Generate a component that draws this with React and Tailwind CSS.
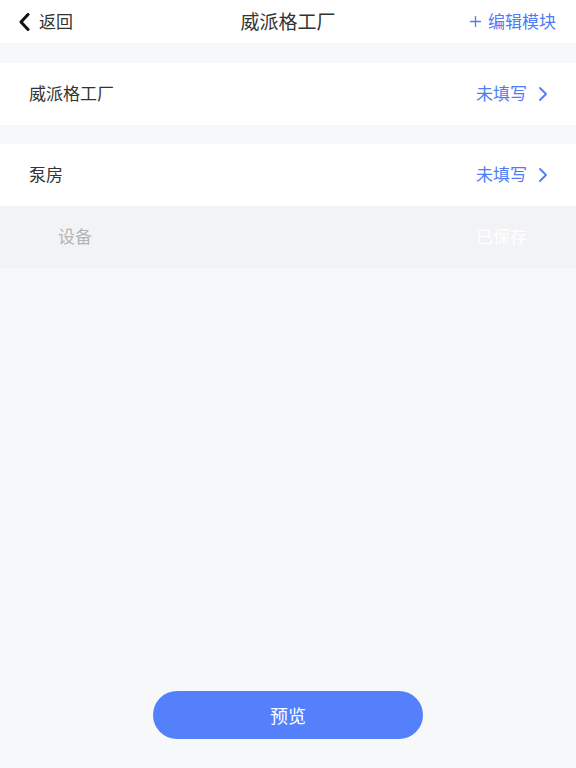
import { ChevronRight, Plus } from 'lucide-react'

const font = { fontFamily: '"Noto Sans CJK SC", "Noto Sans", sans-serif' }

function Row({ label, value }) {
  return (
    <div className="h-[62px] bg-white flex items-center pl-[29px] pr-[21px]">
      <span className="text-[17px] text-[#333] -mt-[2px]">{label}</span>
      <div className="flex-1" />
      <span className="text-[17px] text-[#4d7cf6] -mt-[2px]">{value}</span>
      <ChevronRight className="w-[24px] h-[24px] text-[#4d7cf6] ml-[4px]" strokeWidth={1.8} />
    </div>
  )
}

export default function App() {
  return (
    <div className="w-[576px] h-[768px] bg-[#f7f8fa] flex flex-col" style={font}>
      {/* Header */}
      <div className="h-[43px] bg-white grid grid-cols-[1fr_auto_1fr] items-center px-[18px] shrink-0">
        <div className="flex items-center">
          <svg width="12" height="18" viewBox="0 0 12 18" className="text-[#111]">
            <path d="M10 1.5 L3 9 L10 16.5" fill="none" stroke="currentColor" strokeWidth="3" strokeLinecap="round" strokeLinejoin="round" />
          </svg>
          <span className="text-[17px] text-[#333] ml-[9px] -mt-[1px]">返回</span>
        </div>
        <div className="text-center text-[19px] text-[#333] -mt-[1px]">威派格工厂</div>
        <div className="flex items-center justify-end text-[#4d7cf6] pr-[2px]">
          <Plus className="w-[17px] h-[17px]" strokeWidth={1.8} />
          <span className="text-[17px] ml-[4px] -mt-[1px]">编辑模块</span>
        </div>
      </div>

      <div className="h-[20px] shrink-0" />
      <Row label="威派格工厂" value="未填写" />
      <div className="h-[19px] shrink-0" />
      <Row label="泵房" value="未填写" />
      <div className="h-[62px] bg-[#f2f3f5] flex items-center pl-[58px] pr-[49px]">
        <span className="text-[17px] text-[#b3b3b3] -mt-[2px]">设备</span>
        <div className="flex-1" />
        <span className="text-[17px] text-white -mt-[2px]">已保存</span>
      </div>

      <div className="flex-1" />

      <div className="flex justify-center pb-[29px]">
        <button className="w-[270px] h-[48px] rounded-full bg-[#5580fc] text-white text-[18px]">
          预览
        </button>
      </div>
    </div>
  )
}
